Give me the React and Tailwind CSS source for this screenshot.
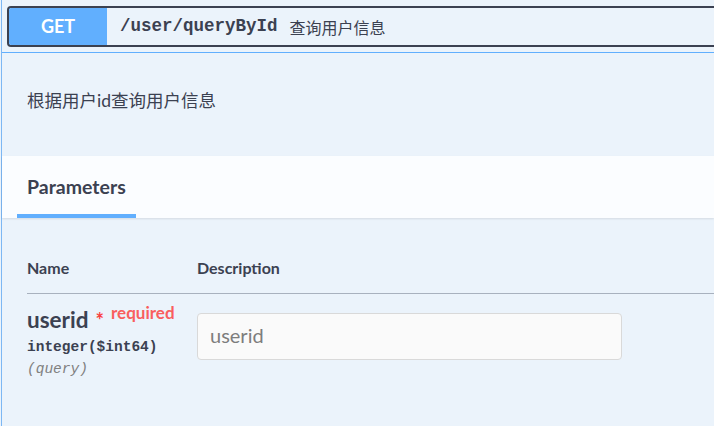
export default function App() {
  const sans = { fontFamily: 'Lato, "Noto Sans CJK SC", sans-serif' };
  const mono = { fontFamily: '"Liberation Mono", "DejaVu Sans Mono", monospace' };

  return (
    <div className="w-[714px] h-[426px] overflow-hidden bg-[#ebf3fb] text-[#3b4151]" style={sans}>
      <div className="ml-px h-full border-l border-[#7db7f3]">
        {/* Summary bar */}
        <div className="pt-[6px] pb-[5px] pl-[5px] border-b border-[#61affe]">
          <div className="flex items-stretch h-[41px] -mr-4 border-2 border-r-0 border-[#3b4151] rounded-l-[4px] overflow-hidden">
            <div className="w-[98px] bg-[#61affe] text-white font-bold text-[18px] flex items-center justify-center">
              GET
            </div>
            <div className="flex items-center pl-[13px]">
              <span className="font-bold text-[17.5px]" style={mono}>/user/queryById</span>
              <span className="ml-[12px] text-[16px]" style={{ fontFamily: '"Noto Sans CJK SC", sans-serif' }}>查询用户信息</span>
            </div>
          </div>
        </div>

        {/* Description */}
        <div className="h-[103px] pl-[25px] pt-[35px] text-[17.5px]">
          根据用户id查询用户信息
        </div>

        {/* Parameters header */}
        <div className="h-[62px] bg-[#fbfdff] shadow-[0_1px_2px_rgba(0,0,0,0.1)] flex items-end pl-[15px]">
          <div className="px-[10px] pb-[17px] border-b-[4px] border-[#61affe] font-bold text-[19.5px] leading-[21px]">
            Parameters
          </div>
        </div>

        {/* Table */}
        <div className="pl-[25px] pt-[40px]">
          <div className="flex font-bold text-[16px] leading-[20px] pb-[15px] border-b border-[#a8b1be]">
            <div className="w-[170px]">Name</div>
            <div>Description</div>
          </div>
          <div className="flex pt-[11px]">
            <div className="w-[170px]">
              <div className="flex items-start whitespace-nowrap">
                <span className="font-bold text-[22.5px] leading-[30px]">userid</span>
                <span className="ml-[7px] mt-[5px] text-[#f93e3e] text-[20px] leading-[20px] font-bold">*</span>
                <span className="ml-[7px] text-[#f95e5e] text-[17px] leading-[16px] font-bold">required</span>
              </div>
              <div className="font-bold text-[14.5px] leading-[20px] mt-[2px]" style={mono}>integer($int64)</div>
              <div className="italic text-[14.5px] leading-[20px] text-[#808080] mt-[2px]" style={mono}>(query)</div>
            </div>
            <div className="pt-[8px]">
              <div className="w-[425px] h-[47px] bg-[#fafafa] border border-[#d9d9d9] rounded-[4px] flex items-center pl-[12px] pb-[3px] text-[20px] text-[#7d7d7d]">
                userid
              </div>
            </div>
          </div>
        </div>
      </div>
    </div>
  );
}
